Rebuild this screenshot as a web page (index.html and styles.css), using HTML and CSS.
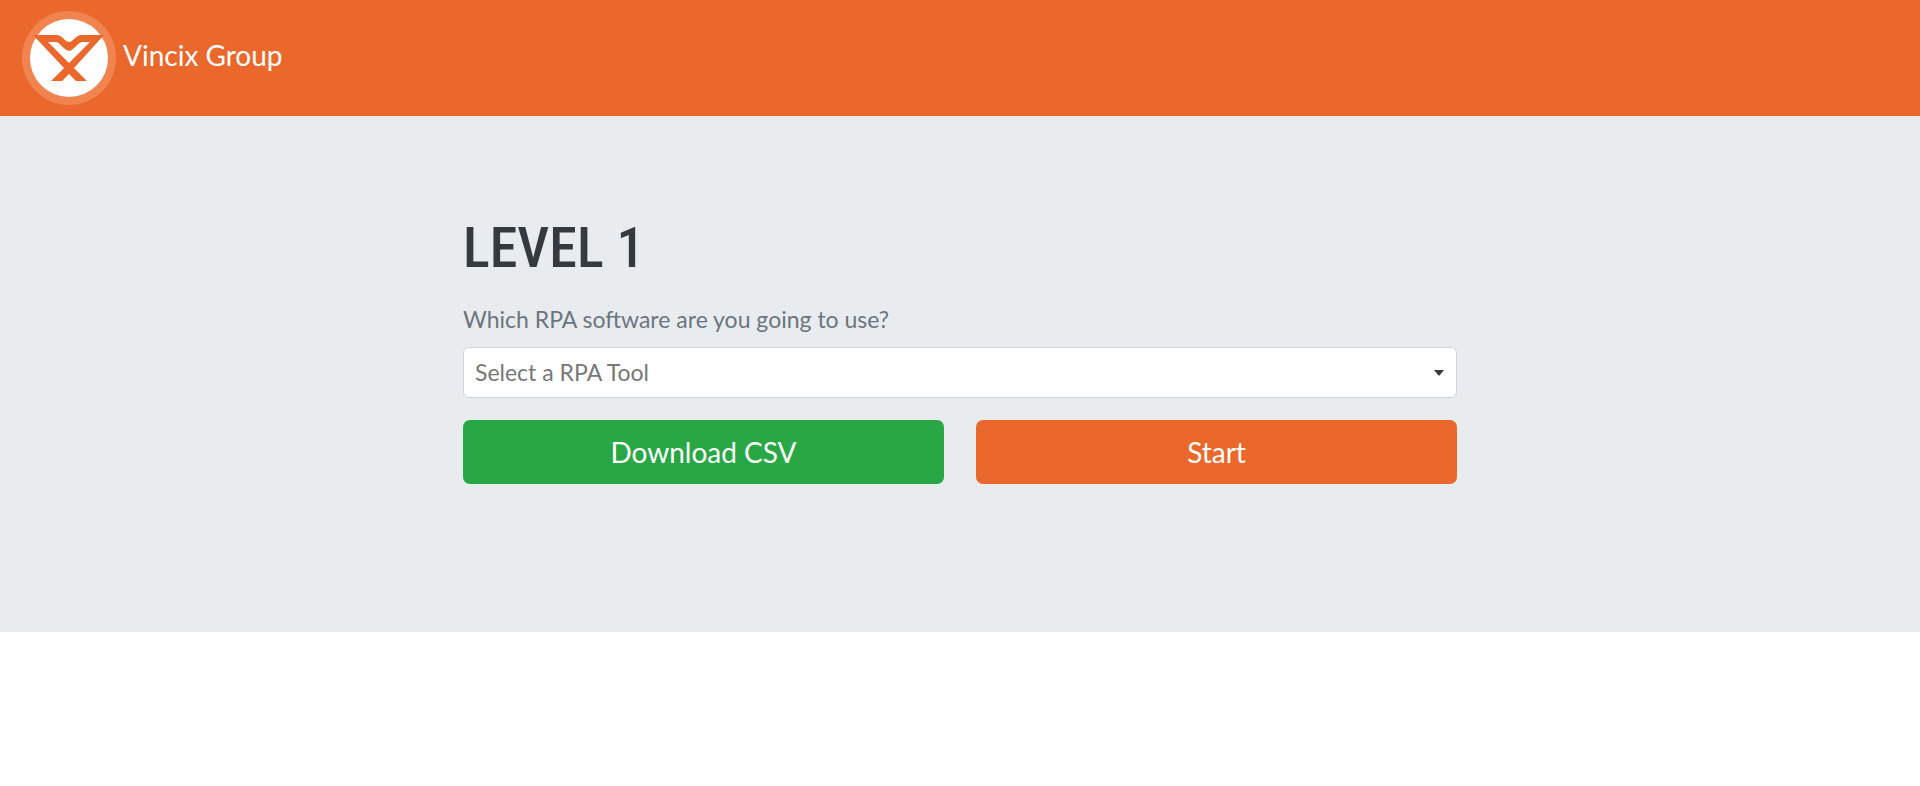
FILE: index.html
```html
<!DOCTYPE html>
<html lang="en">
<head>
<meta charset="utf-8">
<meta name="viewport" content="width=device-width, initial-scale=1">
<title>Vincix Group</title>
<link rel="stylesheet" href="styles.css">
</head>
<body>
<header class="navbar">
  <a class="brand" href="#">
    <svg class="brand-logo" viewBox="0 0 94 94" aria-hidden="true">
      <circle cx="47" cy="47" r="47" fill="#f1834f"/>
      <circle cx="47" cy="47" r="39" fill="#fff"/>
      <path fill="#ea682c" fill-rule="evenodd" d="M11 24H34C38 24 40 26 43 29Q47 33 51 29C54 26 56 24 60 24H82L52 57L65 70H54L47 63L40 70H29L42 57ZM26 31L47 52L68 31H61C57 31 56 34 52 37Q47 43 42 37C38 34 37 31 33 31Z"/>
    </svg>
    <span class="brand-name">Vincix Group</span>
  </a>
</header>
<main class="hero">
  <form class="panel">
    <h1 class="title">LEVEL 1</h1>
    <label class="question" for="tool">Which RPA software are you going to use?</label>
    <div class="select-wrap">
      <select class="select" id="tool">
        <option>Select a RPA Tool</option>
      </select>
      <svg class="select-arrow" viewBox="0 0 10 6" aria-hidden="true"><path d="M0 0H10L5 6Z" fill="#343a40"/></svg>
    </div>
    <div class="actions">
      <button class="button button-download" type="button">Download CSV</button>
      <button class="button button-start" type="button">Start</button>
    </div>
  </form>
</main>
</body>
</html>
```
FILE: styles.css
```css
* {
  box-sizing: border-box;
}

body {
  margin: 0;
  background: #fff;
  font-family: Lato, "Open Sans", sans-serif;
  font-size: 23px;
}

.navbar {
  display: flex;
  padding: 11px 22px;
  background: #ea682c;
}

.brand {
  display: flex;
  align-items: center;
  gap: 7px;
  color: #fff;
  font-size: 28px;
  line-height: 34px;
  text-decoration: none;
}

.brand-logo {
  width: 94px;
  height: 94px;
}

.brand-name {
  padding-bottom: 6px;
}

.hero {
  padding: 88px 22px 148px;
  background: #e9ecef;
}

.panel {
  max-width: 994px;
  margin: 0 auto;
}

.title {
  margin: 0 0 10px;
  color: #343a40;
  font-family: "Roboto Condensed", "Liberation Sans Narrow", "Liberation Sans", sans-serif;
  font-size: 56px;
  font-weight: 500;
  line-height: 88px;
}

.question {
  display: block;
  margin-bottom: 10px;
  color: #6c757d;
  line-height: 35px;
}

.select-wrap {
  position: relative;
  margin-bottom: 22px;
}

.select {
  display: block;
  width: 100%;
  height: 51px;
  padding: 0 40px 2px 11px;
  border: 1px solid #ced4da;
  border-radius: 6px;
  appearance: none;
  background: #fff;
  color: #777;
  font: inherit;
}

.select-arrow {
  position: absolute;
  top: 23px;
  right: 13px;
  width: 10px;
  height: 6px;
  pointer-events: none;
}

.actions {
  display: grid;
  grid-template-columns: 1fr 1fr;
  gap: 32px;
}

.button {
  height: 64px;
  padding: 0 16px;
  border: 0;
  border-radius: 7px;
  color: #fff;
  font-family: inherit;
  font-size: 28px;
}

.button-download {
  background: #28a745;
}

.button-start {
  background: #ea682c;
}
```
